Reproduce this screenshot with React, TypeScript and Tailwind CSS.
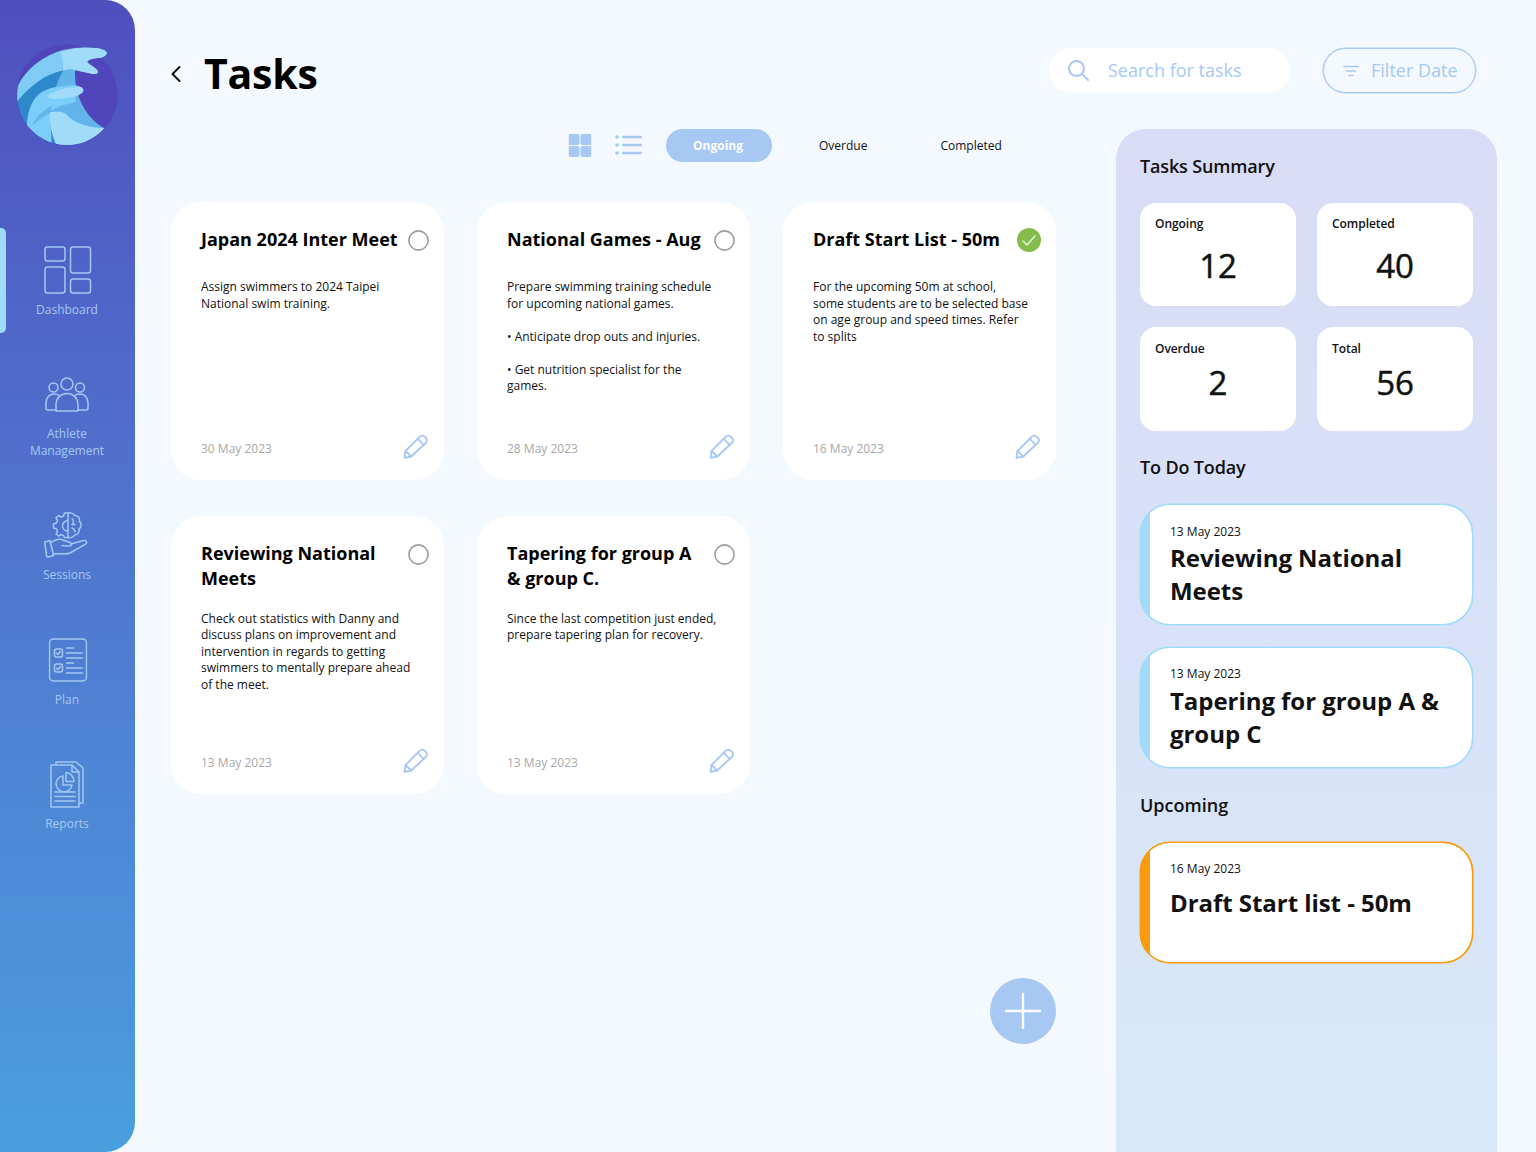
import React from "react";

const NAV = "#a3c8f2";

function Logo() {
  return (
    <svg width="135" height="160" viewBox="0 0 135 160" className="block">
      <defs>
        <clipPath id="lc"><circle cx="67" cy="95" r="50" /><rect x="60" y="40" width="60" height="38" /></clipPath>
      </defs>
      <circle cx="67" cy="95" r="50.5" fill="#5045bb" />
      <g clipPath="url(#lc)">
        <path d="M15 104 C24 86 42 74 64 70 L76 70 C66 86 62 100 50 113 L60 150 L15 150 Z" fill="#2f88c9" />
        <path d="M64 70 L75 70 C74 96 86 118 104 128 L96 150 L58 150 C48 130 50 112 54 100 C55 88 58 78 64 70Z" fill="#62b4ea" />
        <path d="M14 97 C20 72 42 56 63 50 C76 47 86 47 93 48 C100 48 106 50 107 53 C106 56 103 57 100 58 C94 58 89 59 87 62 C90 65 98 69 98 72 C97 75 93 74 88 73 C84 72 79 71 75 70 C68 69 64 70 63 70.5 C44 74 28 88 15 104 Z" fill="#7ecbf6" />
        <path d="M60 53 C65 50 80 47 93 48 C100 48 106 50 107 53 C106 56 103 57 100 58 C94 58 89 59 87 62 C90 65 98 69 98 72 C97 75 93 74 88 73 C84 72 79 71 75 70 C70 69 66 70 63 70.5 C63 65 64 60 60 53Z" fill="#a0dcfa" />
        <path d="M27 128 C27 118 28 108 36 97 C42 90 52 87 63 86 C70 85 78 85 81 87 C84 89 84 91 82 93 C79 95 76 96 75 97 C76 99 77 101 75 102 C71 104 66 104 63 105 C58 107 53 109 50 112 L52 150 L27 150 Z" fill="#7ccefa" />
        <path d="M47 96 C52 92 60 90 66 88 C72 87 78 87 81 87 C84 89 84 91 82 93 C79 95 76 96 75 97 C70 98 62 98 56 99 C52 99 48 98 47 96Z" fill="#a0dcfa" />
        <path d="M32 126 C36 116 44 110 52 106 L50 113 C44 116 38 120 32 126Z" fill="#62b4ea" />
        <path d="M50 112 C56 111 62 111 66 114 C72 122 88 128 104 128 L96 150 L60 150 C52 138 49 125 50 112Z" fill="#a0dcfa" />
      </g>
    </svg>
  );
}

const I = ({ w, h, children, className }: { w: number; h: number; className?: string; children: React.ReactNode }) => (
  <svg width={w} height={h} viewBox={`0 0 ${w} ${h}`} fill="none" stroke={NAV} strokeWidth="1.5" strokeLinecap="round" strokeLinejoin="round" className={`block shrink-0 ${className ?? ""}`}>
    {children}
  </svg>
);

function DashIcon() {
  return (
    <I w={48} h={48}>
      <rect x="1" y="1" width="20" height="14" rx="2.5" />
      <rect x="26.5" y="1" width="20" height="26" rx="2.5" />
      <rect x="1" y="21" width="20" height="26" rx="2.5" />
      <rect x="26.5" y="33" width="20" height="14" rx="2.5" />
    </I>
  );
}
function PeopleIcon() {
  return (
    <I w={44} h={36}>
      <circle cx="22" cy="7" r="6" />
      <circle cx="8.5" cy="10.5" r="4.5" />
      <circle cx="35" cy="10.5" r="4.5" />
      <path d="M11 34 V28 C11 21 16 16.5 22 16.5 C28 16.5 33 21 33 28 V34 H11Z" />
      <path d="M11 33 H3 C1.5 33 1 32 1 31 V26 C1 20 5 17 9 17 C11 17 13 17.5 14 18.5" />
      <path d="M33 33 H41 C42.5 33 43 32 43 31 V26 C43 20 39 17 35 17 C33 17 31 17.5 30 18.5" />
    </I>
  );
}
function SessionIcon() {
  return (
    <I w={44} h={46} className="-translate-x-[2px]">
      <path d="M24 1 H20.5 L19.5 4 L17 5 L14.5 3.5 L12 6 L13.5 8.5 L12.5 11 L9.5 12 V16 L12.5 17 L13.5 19.5 L12 22 L14.5 24 L17 22.5 L19.5 23.5 L20.5 25.5 H24 Z" />
      <path d="M24 8.5 C21 8.5 18.5 11 18.5 14 C18.5 17 21 19 24 19" />
      <path d="M24 1 C26 0.5 29.5 1 30.5 3.5 C33.5 3.2 36.2 6 35.5 9.5 C37.8 11 37.8 15 35 17 C36 20 33.5 23 30.5 23 C29.5 25.5 26 26 24 25.5" />
      <path d="M28 6.5 C30 8.5 30 10.5 28 12.5 H31 M28 16 C30 16.5 31 18 31 20" />
      <path d="M0.7 30 L6 28.5 L9.7 43.5 L4.2 45 C3.2 45.2 2.8 44.6 2.6 44 Z" />
      <path d="M6.3 31 C11 27.5 15 26 19 28 L26 30.5 C28.2 31.5 27.5 34.2 25 34 L18 33.5" />
      <path d="M27 32 L39.5 28.5 C43 28 43.5 31 41.5 32.2 L26 41 C22 43 15 41 9 42" />
    </I>
  );
}
function PlanIcon() {
  return (
    <I w={39} h={44} className="translate-x-[0.5px]">
      <rect x="1" y="1" width="37" height="42" rx="4" />
      <rect x="6" y="11" width="8" height="8" rx="2" />
      <rect x="6" y="26" width="8" height="8" rx="2" />
      <path d="M8 15 L9.5 16.5 L12 13.5 M8 30 L9.5 31.5 L12 28.5" />
      <path d="M18 10 H25 M18 15 H34 M18 20 H34 M18 25 H25 M18 30 H34 M18 35 H34" />
    </I>
  );
}
function ReportIcon() {
  return (
    <I w={35} h={48}>
      <path d="M6 3 V1 H26 L33 7 V42 H29" />
      <path d="M1 4 H22 L29 11 V46 H1 Z" />
      <path d="M22 4 V11 H29" />
      <path d="M13 15 A8 8 0 1 0 22 24 H13 Z" />
      <path d="M16 11.5 A9 9 0 0 1 24 20.5 H16 Z" />
      <path d="M5 31 H25 M5 35.5 H25 M5 40 H25" />
    </I>
  );
}

function NavItem({ icon, label, className }: { icon: React.ReactNode; label: React.ReactNode; className: string }) {
  return (
    <div className={`flex flex-col items-center ${className}`}>
      {icon}
      <div className="text-[12px] leading-[17px] text-center text-[#a3c8f2] pr-[1px]">{label}</div>
    </div>
  );
}

function Sidebar() {
  return (
    <aside className="relative w-[135px] h-[1152px] shrink-0 rounded-r-[30px] bg-gradient-to-b from-[#4f4fbf] to-[#4a9fde] flex flex-col items-center">
      <div className="absolute left-0 top-[228px] w-[6px] h-[105px] rounded-r-[5px] bg-[#a0dcfa]" />
      <div className="h-[160px] w-[135px] shrink-0"><Logo /></div>
      <NavItem className="mt-[86px]" icon={<DashIcon />} label={<div className="mt-[7px]">Dashboard</div>} />
      <NavItem className="mt-[59px]" icon={<PeopleIcon />} label={<div className="mt-[12px]">Athlete<br />Management</div>} />
      <NavItem className="mt-[53px]" icon={<SessionIcon />} label={<div className="mt-[8px]">Sessions</div>} />
      <NavItem className="mt-[55px]" icon={<PlanIcon />} label={<div className="mt-[9px]">Plan</div>} />
      <NavItem className="mt-[53px]" icon={<ReportIcon />} label={<div className="mt-[6px]">Reports</div>} />
    </aside>
  );
}

function Pencil() {
  return (
    <svg width="25" height="25" viewBox="0 0 25 25" fill="none" stroke="#a6c8f3" strokeWidth="1.8" strokeLinejoin="round" strokeLinecap="round" className="block">
      <path d="M1.5 23.8 L2.5 17 L16.5 3 C18 1.4 20 1.4 21.5 2.6 L23 4 C24.5 5.5 24.3 7.5 22.7 9 L8.3 22.5 Z" />
      <path d="M15 5 L20.5 10.8 M2.5 17 L8.3 22.5" />
    </svg>
  );
}

function Radio({ done }: { done?: boolean }) {
  if (done)
    return (
      <div className="w-[24px] h-[24px] mt-[1px] rounded-full bg-[#84bd4b] flex items-center justify-center shrink-0">
        <svg width="14" height="11" viewBox="0 0 14 11" fill="none" stroke="#e4f0d6" strokeWidth="1.6" strokeLinecap="round" strokeLinejoin="round"><path d="M1 6 L5 10 L13 1" /></svg>
      </div>
    );
  return (
    <svg width="21" height="21" viewBox="0 0 21 21" fill="none" stroke="#9c9c9c" strokeWidth="1.6" className="block mt-[3px] shrink-0">
      <circle cx="10.5" cy="10.5" r="9.6" />
    </svg>
  );
}

function Card({ title, date, done, twoLine, children }: { title: React.ReactNode; date: string; done?: boolean; twoLine?: boolean; children: React.ReactNode }) {
  return (
    <div className="h-[278px] rounded-[30px] bg-white pl-[30px] pr-[15px] pt-[25px] pb-[21px] flex flex-col">
      <div className="flex justify-between items-start">
        <div className="text-[18px] leading-[25px] font-bold text-black">{title}</div>
        <Radio done={done} />
      </div>
      <div className={`text-[12px] leading-[16.5px] text-[#111] pr-[5px] ${twoLine ? "mt-[19.75px]" : "mt-[27px]"}`}>{children}</div>
      <div className="mt-auto flex justify-between items-end">
        <div className="text-[12px] leading-[17px] mb-[2px] text-[#a8a8a8]">{date}</div>
        <div className="mr-[1px]"><Pencil /></div>
      </div>
    </div>
  );
}

function Stat({ label, value, low }: { label: string; value: string; low?: boolean }) {
  return (
    <div className={`rounded-[16px] bg-white pt-[12px] px-[15px] ${low ? "h-[104px]" : "h-[103px]"}`}>
      <div className={`text-[12px] leading-[17px] font-semibold tracking-[-0.05px] text-[#111] ${low ? "mt-[1px]" : ""}`}>{label}</div>
      <div className={`text-[33px] leading-[44px] font-normal [-webkit-text-stroke:0.5px_#111] text-[#111] text-center ${low ? "mt-[4px]" : "mt-[12px]"}`}>{value}</div>
    </div>
  );
}

function TodoCard({ date, title, accent, dateTop, titleTop, className }: { date: string; title: React.ReactNode; accent: "blue" | "orange"; dateTop: string; titleTop: string; className?: string }) {
  const a = accent === "blue";
  return (
    <div className={`h-[121px] rounded-[30px] overflow-hidden flex border ${a ? "border-[#a0dcfa] bg-[#a0dcfa] shadow-[0_0_0_0.5px_#a0dcfa]" : "border-[#f99b0c] bg-[#f99b0c] shadow-[0_0_0_0.5px_#f99b0c]"} ${className ?? ""}`}>
      <div className="w-[9px] shrink-0" />
      <div className={`flex-1 bg-white rounded-r-[29px] pl-[20px] ${dateTop}`}>
        <div className="text-[12px] leading-[17px] text-[#111]">{date}</div>
        <div className={`text-[24px] leading-[33px] font-bold tracking-[-0.05px] text-[#111] ${titleTop}`}>{title}</div>
      </div>
    </div>
  );
}

function Icons() {
  return (
    <>
      <svg width="23" height="23" viewBox="0 0 23 23" fill="#a6c8f3" className="block translate-x-[0.5px]">
        <rect x="0" y="0" width="11" height="11" rx="2" />
        <rect x="12" y="0" width="11" height="11" rx="2" />
        <rect x="0" y="12" width="11" height="11" rx="2" />
        <rect x="12" y="12" width="11" height="11" rx="2" />
      </svg>
      <svg width="27" height="20" viewBox="0 0 27 20" fill="#a6c8f3" className="block ml-[24px] -mt-[1px]">
        <circle cx="2" cy="2" r="1.8" /><circle cx="2" cy="10" r="1.8" /><circle cx="2" cy="18" r="1.8" />
        <rect x="7" y="0.7" width="20" height="2.6" rx="1.3" />
        <rect x="7" y="8.7" width="20" height="2.6" rx="1.3" />
        <rect x="7" y="16.7" width="20" height="2.6" rx="1.3" />
      </svg>
    </>
  );
}

export default function App() {
  return (
    <div className="w-[1536px] h-[1152px] overflow-hidden flex bg-[#f4f8ff] font-['Open_Sans',sans-serif]">
      <Sidebar />
      <main className="flex-1 flex flex-col">
        <header className="h-[129px] shrink-0 flex items-start pt-[48px] pl-[36px]">
          <svg width="12" height="18" viewBox="0 0 12 18" fill="none" stroke="#111" strokeWidth="2" strokeLinecap="round" strokeLinejoin="round" className="mt-[17px] -ml-[1px]">
            <path d="M9.5 2 L2.5 9 L9.5 16" />
          </svg>
          <h1 className="ml-[22px] text-[41px] leading-[50px] font-bold tracking-[-0.2px] text-black">Tasks</h1>
          <div className="ml-auto w-[241px] h-[45px] rounded-[23px] bg-white flex items-center pl-[18px]">
            <svg width="23" height="23" viewBox="0 0 23 23" fill="none" stroke="#a6c8f3" strokeWidth="2" strokeLinecap="round" className="block">
              <circle cx="9.5" cy="9.5" r="7.5" /><path d="M15 15 L21 21" />
            </svg>
            <span className="ml-[18px] text-[18px] text-[#a6c8f3]">Search for tasks</span>
          </div>
          <div className="ml-[33px] mr-[60px] w-[153px] h-[45px] rounded-[23px] border border-[#a6c8f3] shadow-[0_0_0_0.5px_#a6c8f3] flex items-center pl-[19px]">
            <svg width="16" height="12" viewBox="0 0 16 12" fill="none" stroke="#a6c8f3" strokeWidth="1.6" strokeLinecap="round" className="block">
              <path d="M1 1.5 H15 M3.5 6 H12.5 M6 10.5 H10" />
            </svg>
            <span className="ml-[12px] text-[18px] text-[#a6c8f3]">Filter Date</span>
          </div>
        </header>
        <div className="flex-1 flex pl-[36px]">
          <section className="w-[885px] flex flex-col">
            <div className="h-[33px] flex items-center pl-[397px]">
              <Icons />
              <div className="ml-[24px] w-[106px] h-[33px] rounded-[17px] bg-[#a6c8f3] text-white font-bold text-[12px] flex items-center justify-center pr-[2px]">Ongoing</div>
              <div className="ml-[47px] text-[12px] text-[#111]">Overdue</div>
              <div className="ml-[73px] text-[12px] text-[#111]">Completed</div>
            </div>
            <div className="grid grid-cols-[273px_273px_273px] gap-x-[33px] gap-y-[36px] mt-[40px]">
              <Card title="Japan 2024 Inter Meet" date="30 May 2023">
                Assign swimmers to 2024 Taipei<br />National swim training.
              </Card>
              <Card title="National Games - Aug" date="28 May 2023">
                Prepare swimming training schedule<br />for upcoming national games.<br /><br />• Anticipate drop outs and injuries.<br /><br />• Get nutrition specialist for the<br />games.
              </Card>
              <Card title="Draft Start List - 50m" date="16 May 2023" done>
                For the upcoming 50m at school,<br />some students are to be selected base<br />on age group and speed times. Refer<br />to splits
              </Card>
              <Card twoLine title={<>Reviewing National<br />Meets</>} date="13 May 2023">
                Check out statistics with Danny and<br />discuss plans on improvement and<br />intervention in regards to getting<br />swimmers to mentally prepare ahead<br />of the meet.
              </Card>
              <Card twoLine title={<>Tapering for group A<br />&amp; group C.</>} date="13 May 2023">
                Since the last competition just ended,<br />prepare tapering plan for recovery.
              </Card>
            </div>
            <div className="self-end mt-[184px] w-[66px] h-[66px] rounded-full bg-[#a6c8f3] flex items-center justify-center">
              <svg width="38" height="38" viewBox="0 0 38 38" stroke="#fff" strokeWidth="2.4" strokeLinecap="round" className="block"><path d="M19 2 V36 M2 19 H36" /></svg>
            </div>
          </section>
          <aside className="ml-[60px] w-[381px] rounded-t-[30px] bg-gradient-to-b from-[#d9dcf6] to-[#d8e8f9] px-[24px] pt-[25px]">
            <div className="text-[18px] leading-[25px] font-semibold tracking-[-0.15px] text-[#111]">Tasks Summary</div>
            <div className="grid grid-cols-[156px_156px] gap-x-[21px] gap-y-[21px] mt-[24px]">
              <Stat label="Ongoing" value="12" />
              <Stat label="Completed" value="40" />
              <Stat low label="Overdue" value="2" />
              <Stat low label="Total" value="56" />
            </div>
            <div className="text-[18px] leading-[25px] font-semibold tracking-[-0.15px] text-[#111] mt-[24px]">To Do Today</div>
            <TodoCard className="mt-[24px]" accent="blue" date="13 May 2023" dateTop="pt-[18px]" titleTop="mt-[1px]" title={<>Reviewing National<br />Meets</>} />
            <TodoCard className="mt-[22px]" accent="blue" date="13 May 2023" dateTop="pt-[17px]" titleTop="mt-[2px]" title={<>Tapering for group A &amp;<br />group C</>} />
            <div className="text-[18px] leading-[25px] font-semibold text-[#111] mt-[25px]">Upcoming</div>
            <TodoCard className="mt-[24px]" accent="orange" date="16 May 2023" dateTop="pt-[17px]" titleTop="mt-[9px]" title="Draft Start list - 50m" />
          </aside>
        </div>
      </main>
    </div>
  );
}
